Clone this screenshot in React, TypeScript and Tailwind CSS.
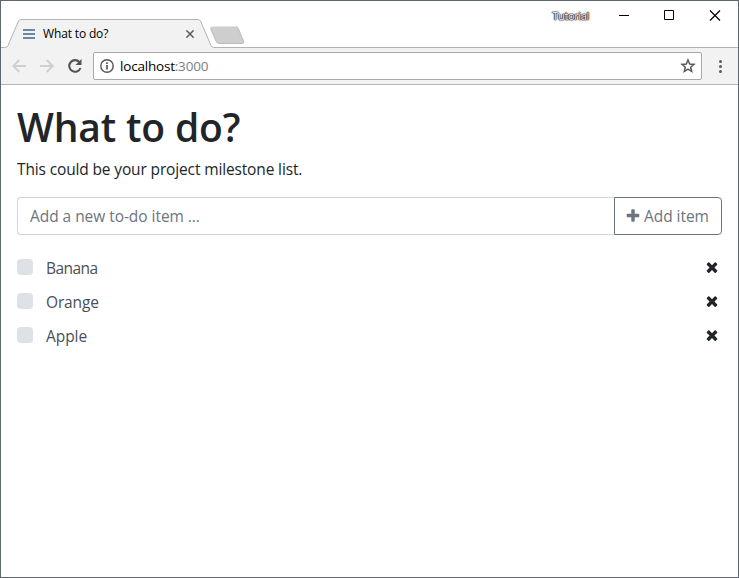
import React from "react";

const items = [
  { name: "Banana", spacing: "tracking-[-0.550px]" },
  { name: "Orange", spacing: "tracking-[-0.150px]" },
  { name: "Apple", spacing: "tracking-[-0.050px]" },
];

function Times() {
  return (
    <svg className="block h-4 w-4" viewBox="0 0 1792 1792" fill="#212529">
      <path d="M1490 1322q0 40-28 68l-136 136q-28 28-68 28t-68-28l-294-294-294 294q-28 28-68 28t-68-28l-136-136q-28-28-28-68t28-68l294-294-294-294q-28-28-28-68t28-68l136-136q28-28 68-28t68 28l294 294 294-294q28-28 68-28t68 28l136 136q28 28 28 68t-28 68l-294 294 294 294q28 28 28 68z" />
    </svg>
  );
}

function Plus() {
  return (
    <svg className="block h-4 w-4 shrink-0" viewBox="0 0 1792 1792" fill="#6c757d">
      <path d="M1600 736v192q0 40-28 68t-68 28h-416v416q0 40-28 68t-68 28h-192q-40 0-68-28t-28-68v-416h-416q-40 0-68-28t-28-68v-192q0-40 28-68t68-28h416v-416q0-40 28-68t68-28h192q40 0 68 28t28 68v416h416q40 0 68 28t28 68z" />
    </svg>
  );
}

function TitleBar() {
  return (
    <div className="relative flex h-[47px] justify-between">
      {/* Tab outline and the new-tab button */}
      <svg className="absolute left-0 top-0 h-[47px] w-[737px]" viewBox="1 1 737 47" fill="none">
        <path d="M1 47.5H5.500Q7 47.500 8 45.500L18.500 21Q19.300 19.500 20.800 19.500H198.200Q199.700 19.500 200.500 21L211 45.500Q212 47.500 213.500 47.500H738V48.500H1Z" fill="#f2f2f2" />
        <path d="M1 47.500H5.500Q7 47.500 8 45.500L18.500 21Q19.300 19.500 20.800 19.500H198.200Q199.700 19.500 200.500 21L211 45.500Q212 47.500 213.500 47.500H738" stroke="#b3b3b3" />
        <path d="M212.500 26.500H235.500Q237.500 26.500 238.300 28.500L243.500 41Q244.500 43.500 242 43.500H219Q217 43.500 216.200 41.500L210.500 28.500Q209.800 26.500 212.500 26.500Z" fill="#cecece" />
        <path d="M236 26.500Q237.500 26.500 238.300 28.500L243.500 41Q244.500 43.500 242 43.500H219Q217 43.500 216.200 41.500L210.500 28.500" stroke="#bdbdbd" />
      </svg>
      <div className="relative mt-[19px] flex h-7 w-[193px] items-center pl-[22px]">
        <svg className="h-[10px] w-3" viewBox="0 0 12 10" fill="#6a87a5">
          <path d="M0 0h12v2H0zM0 4h12v2H0zM0 8h12v2H0z" />
        </svg>
        <span className="ml-2 whitespace-nowrap text-[12px] leading-4 tracking-[-0.150px] text-black">What to do?</span>
        <svg className="ml-auto h-2 w-2" viewBox="0 0 8 8" stroke="#5a5a5a" strokeWidth="1.500">
          <path d="M0.400.400l7.200 7.200M7.600.400L.400 7.600" />
        </svg>
      </div>
      <div className="relative flex h-[29px] items-center pr-[17px]">
        <span className="mr-[30px] text-[11px] leading-4 tracking-[-0.350px] text-white [text-shadow:0_0_1px_#000,0_0_1px_#000,0_0_1px_#000,0_0_2px_#222]">Tutorial</span>
        <svg className="h-[11px] w-[102px]" viewBox="0 0 102 11" fill="none" stroke="#000">
          <path d="M0 5.500h10M45.500.500h9v9h-9z" />
          <path d="M91 .500l10 10M101 .500l-10 10" strokeWidth="1.200" />
        </svg>
      </div>
    </div>
  );
}

function Toolbar() {
  return (
    <div className="flex h-[37px] items-center border-b border-[#b6b6b6] bg-[#f2f2f2] pl-[11px] pr-4">
      <svg className="h-[14px] w-[72px] shrink-0" viewBox="0 0 72 14" fill="none" stroke="#cfcfcf" strokeWidth="1.900">
        <path d="M14 7H1.500M7.300 1L1.300 7l6 6M28 7h12.500M34.700 1l6 6-6 6" />
        <path d="M67.500 3.200A5.800 5.800 0 1 0 68.500 9" stroke="#555" strokeWidth="2.100" />
        <path d="M69.500 0v6h-6z" fill="#555" stroke="none" />
      </svg>
      <div className="ml-[9px] flex h-7 flex-1 items-center rounded-[2px] border border-[#a9a9a9] bg-white pl-[6px] pr-[5px]">
        <svg className="h-[14px] w-[14px]" viewBox="0 0 14 14" fill="none" stroke="#555">
          <circle cx="7" cy="7" r="6.200" strokeWidth="1.400" />
          <path d="M7 6v4.500M7 3.300v1.700" strokeWidth="1.700" />
        </svg>
        <span className="ml-[6px] text-[13.5px] leading-5 tracking-[-0.2px] text-black">localhost<span className="text-[#808080]">:3000</span></span>
        <svg className="ml-auto h-4 w-4" viewBox="0 0 16 16" fill="none" stroke="#5a5a5a" strokeWidth="1.500">
          <path d="M8 2l1.700 4 4.300.400-3.300 2.800 1 4.200L8 11.200l-3.700 2.200 1-4.200L2 6.400 6.300 6z" />
        </svg>
      </div>
      <svg className="ml-[17px] h-[13px] w-[3px]" viewBox="0 0 3 13" fill="#5a5a5a">
        <circle cx="1.500" cy="1.500" r="1.500" /><circle cx="1.500" cy="6.500" r="1.500" /><circle cx="1.500" cy="11.500" r="1.500" />
      </svg>
    </div>
  );
}

export default function App() {
  return (
    <div className="h-[578px] w-[739px] overflow-hidden border border-[#5f6672] bg-white font-['Open_Sans','Noto_Sans',sans-serif] text-[#212529]">
      <TitleBar />
      <Toolbar />
      <main className="px-4 pt-[18px]">
        <h1 className="whitespace-nowrap text-[39px] font-semibold leading-12 tracking-[-0.150px]">What to do?</h1>
        <p className="mt-[6px] whitespace-nowrap text-[15.5px] leading-6 tracking-[-0.140px]">This could be your project milestone list.</p>
        <form className="mt-4 flex h-[38px]">
          <input
            className="min-w-0 flex-1 rounded-l border border-r-0 border-[#ced4da] px-3 pt-[2px] text-[15.5px] tracking-[-0.050px] outline-none placeholder:text-[#6c757d]"
            placeholder="Add a new to-do item ..."
          />
          <button type="button" className="flex w-[108px] items-center rounded-r border border-[#6c757d] pl-[10px] text-[15.5px] tracking-[-0.050px] text-[#6c757d]">
            <Plus />
            <span className="ml-[3px] mt-[2px] whitespace-nowrap">Add item</span>
          </button>
        </form>
        <ul className="mt-[21px] flex flex-col gap-[10px]">
          {items.map(({ name, spacing }) => (
            <li key={name} className="flex h-6 items-center pr-[2px]">
              <span className="mb-[3px] h-4 w-4 rounded-[4px] bg-[#dee2e6]" />
              <span className={`ml-[13px] text-[15.5px] leading-6 text-[#495057] ${spacing}`}>{name}</span>
              <span className="mb-[2px] ml-auto"><Times /></span>
            </li>
          ))}
        </ul>
      </main>
    </div>
  );
}
